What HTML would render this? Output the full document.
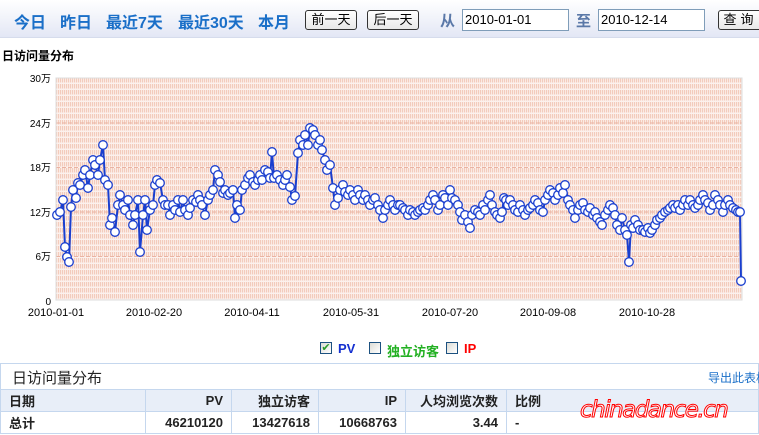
<!DOCTYPE html>
<html><head><meta charset="utf-8"><style>
*{margin:0;padding:0;box-sizing:border-box}
body{width:759px;height:435px;overflow:hidden;background:#fff;font-family:"Liberation Sans","Noto Sans CJK SC",sans-serif;position:relative}
.top{position:absolute;left:0;top:0;width:759px;height:38px;background:linear-gradient(#fff,#e3e7f5);border-bottom:1px solid #d6dcec}
.nav{position:absolute;top:9px;font-size:16px;color:#1a6fc8;font-weight:bold;letter-spacing:0px}
.btn{position:absolute;top:10px;height:20px;border:1px solid #333;border-radius:3px;background:linear-gradient(#fff,#e8e8e8);font-size:13px;text-align:center;line-height:18px;color:#000}
.inp{position:absolute;top:9px;height:22px;border:1px solid #7f9db9;background:#fff;font-size:13px;line-height:20px;padding-left:2px;width:107px}
.lbl{position:absolute;top:10px;font-size:15px;color:#5a78a8;font-weight:bold}
.abs{position:absolute}
.cb{position:absolute;top:342px;width:12px;height:12px;border:1px solid #1c5180;background:linear-gradient(135deg,#dcdcd6,#fff)}
table{position:absolute;left:0;top:389px;width:759px;border-collapse:collapse;font-size:13px}
td{border:1px solid #c5d7ee;height:22px;padding:0 8px;font-weight:bold;color:#222}
tr.h td{background:#e8eef8}
</style></head><body>
<div class="top">
<div class="nav" style="left:14px">今日</div>
<div class="nav" style="left:60px">昨日</div>
<div class="nav" style="left:106px">最近7天</div>
<div class="nav" style="left:178px">最近30天</div>
<div class="nav" style="left:258px">本月</div>
<div class="btn" style="left:305px;width:52px">前一天</div>
<div class="btn" style="left:367px;width:52px">后一天</div>
<div class="lbl" style="left:440px">从</div>
<div class="inp" style="left:462px">2010-01-01</div>
<div class="lbl" style="left:576px">至</div>
<div class="inp" style="left:598px">2010-12-14</div>
<div class="btn" style="left:718px;width:45px;letter-spacing:4px">查询</div>
</div>
<div class="abs" style="left:2px;top:47px;font-size:12px;font-weight:bold">日访问量分布</div>
<svg class="abs" style="left:0;top:0" width="759" height="340" id="ch">
<defs>
<pattern id="p" width="2" height="6" patternUnits="userSpaceOnUse">
<rect width="1.2" height="4.5" fill="#f3cbbc"/>
</pattern>
</defs>
<rect x="56" y="78" width="686" height="222" fill="#fcf1ed"/>
<rect x="56" y="78" width="686" height="222" fill="url(#p)"/>
<g stroke="#eab3a2" stroke-width="1" stroke-dasharray="4 2">
<line x1="56" x2="742" y1="123" y2="123"/><line x1="56" x2="742" y1="167.5" y2="167.5"/><line x1="56" x2="742" y1="212" y2="212"/><line x1="56" x2="742" y1="256.5" y2="256.5"/>
</g>
<rect x="56" y="78" width="686" height="222" fill="none" stroke="#ddd"/>
<g font-size="10" fill="#000" text-anchor="end" font-family="Liberation Sans,Noto Sans CJK SC,sans-serif">
<text x="51" y="82">30万</text><text x="51" y="127">24万</text><text x="51" y="171">18万</text><text x="51" y="216">12万</text><text x="51" y="260">6万</text><text x="51" y="305">0</text>
</g>
<g font-size="11" fill="#000" text-anchor="middle" font-family="Liberation Sans,sans-serif">
<text x="56" y="316">2010-01-01</text><text x="154" y="316">2010-02-20</text><text x="252" y="316">2010-04-11</text><text x="351" y="316">2010-05-31</text><text x="450" y="316">2010-07-20</text><text x="548" y="316">2010-09-08</text><text x="647" y="316">2010-10-28</text>
</g>
</svg>
<div class="cb" style="left:320px;color:#2a9a2a;font-size:11px;line-height:10px;text-align:center">✔</div>
<div class="abs" style="left:338px;top:341px;font-size:13px;color:#1530d0;font-weight:bold">PV</div>
<div class="cb" style="left:369px"></div>
<div class="abs" style="left:387px;top:341px;font-size:13px;color:#22b022;font-weight:bold">独立访客</div>
<div class="cb" style="left:446px"></div>
<div class="abs" style="left:464px;top:341px;font-size:13px;color:#f00;font-weight:bold">IP</div>
<div class="abs" style="left:0;top:363px;width:759px;height:27px;border:1px solid #c5d7ee;border-bottom:none"></div>
<div class="abs" style="left:12px;top:367px;font-size:15px;color:#222">日访问量分布</div>
<div class="abs" style="left:708px;top:369px;font-size:12px;color:#1a6fc8;white-space:nowrap">导出此表格</div>
<table>
<tr class="h"><td style="width:145px">日期</td><td style="width:86px;text-align:right">PV</td><td style="width:87px;text-align:right">独立访客</td><td style="width:87px;text-align:right">IP</td><td style="width:101px;text-align:right">人均浏览次数</td><td>比例</td></tr>
<tr><td>总计</td><td style="text-align:right">46210120</td><td style="text-align:right">13427618</td><td style="text-align:right">10668763</td><td style="text-align:right">3.44</td><td>-</td></tr>
</table>
<div class="abs" style="left:580px;top:397px;font-size:23px;font-style:italic;font-family:'DejaVu Sans',sans-serif;color:#fff;-webkit-text-stroke:1px #f00;letter-spacing:-1.5px;white-space:nowrap">chinadance.cn</div>
<script>
var d=[57,215,60,212,63,200,65,247,67,257,69,262,71,207,73,190,76,198,78,183,80,185,83,175,85,170,88,188,90,175,93,160,95,165,98,175,100,160,103,145,105,180,108,185,110,225,112,218,115,232,118,205,120,195,123,205,125,210,128,200,130,215,133,225,135,215,138,200,140,252,143,215,145,200,147,230,150,210,153,205,155,185,157,180,160,183,163,200,165,205,168,205,170,215,173,205,175,210,178,200,180,212,183,200,185,210,188,215,190,208,193,200,196,202,198,195,200,200,202,205,205,215,208,200,210,195,213,190,215,170,218,175,220,182,223,193,225,190,228,195,230,193,233,190,235,218,237,205,240,210,242,190,245,185,248,178,250,175,253,182,255,185,258,180,260,175,262,180,265,170,268,172,270,178,272,152,274,178,277,175,280,180,283,185,285,180,287,175,290,187,292,200,295,196,298,153,300,140,303,145,305,135,308,145,310,128,313,130,315,135,318,145,320,140,322,150,325,160,327,170,330,165,333,188,335,205,338,198,340,190,343,185,345,192,348,195,350,190,353,195,355,200,358,190,360,195,363,200,365,195,368,200,370,205,373,200,375,198,378,205,380,210,383,218,385,210,388,205,390,200,393,205,395,210,398,205,400,205,403,208,405,210,408,215,410,210,413,212,415,215,418,212,420,210,423,208,425,210,428,205,430,200,433,195,435,200,438,210,440,205,443,195,445,198,448,205,450,190,452,198,455,200,458,205,460,212,462,220,465,215,468,222,470,228,472,215,475,210,478,212,480,215,483,205,485,210,488,200,490,195,492,205,495,212,497,215,500,218,502,212,504,198,506,200,508,205,510,200,513,205,515,210,518,212,520,205,523,210,525,215,528,210,530,208,533,205,535,200,538,203,540,210,543,212,545,200,548,195,550,190,553,193,555,200,558,195,560,188,563,193,565,185,568,200,570,205,573,210,575,218,578,210,580,205,583,203,585,210,588,212,590,208,593,215,595,212,597,218,600,222,602,225,605,215,608,210,610,205,613,208,615,215,617,225,620,230,622,218,625,230,627,235,629,262,631,225,633,228,635,220,638,225,640,230,643,230,645,232,648,228,650,233,652,230,655,225,657,220,660,218,662,215,665,212,668,210,670,208,673,205,675,208,678,205,680,210,683,205,685,200,688,205,690,200,693,205,695,208,698,205,700,200,703,195,705,200,708,203,710,210,713,205,715,195,718,200,720,205,723,212,725,205,728,200,730,205,733,208,736,210,738,212,740,212,741,281];
var s='<polyline fill="none" stroke="#1a3fcf" stroke-width="2" points="'+d.join(' ')+'"/>';
for(var i=0;i<d.length;i+=2)s+='<circle cx="'+d[i]+'" cy="'+d[i+1]+'" r="4.3" fill="#fff" stroke="#1a3fcf" stroke-width="1.3"/>';
document.getElementById('ch').insertAdjacentHTML('beforeend',s);
</script>
</body></html>
